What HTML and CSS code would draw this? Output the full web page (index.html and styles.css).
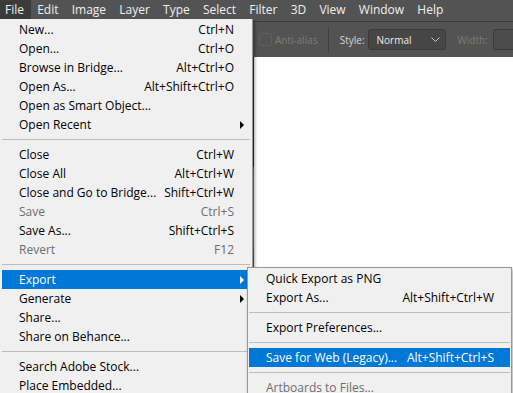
FILE: index.html
```html
<!DOCTYPE html>
<html lang="en">
<head>
    <meta charset="UTF-8">
    <title>Photoshop - File menu</title>
    <link rel="stylesheet" href="styles.css">
</head>
<body>

<div class="menubar">
    <span class="menubar-item active">File</span>
    <span class="menubar-item">Edit</span>
    <span class="menubar-item">Image</span>
    <span class="menubar-item">Layer</span>
    <span class="menubar-item">Type</span>
    <span class="menubar-item">Select</span>
    <span class="menubar-item">Filter</span>
    <span class="menubar-item">3D</span>
    <span class="menubar-item">View</span>
    <span class="menubar-item">Window</span>
    <span class="menubar-item">Help</span>
</div>

<div class="options">
    <span class="checkbox"></span>
    <span class="opt-label disabled">Anti-alias</span>
    <span class="divider"></span>
    <span class="opt-label style-label">Style:</span>
    <div class="select">
        <span>Normal</span>
        <svg width="9" height="6" viewBox="0 0 9 6"><path d="M0.5 0.5 L4.5 4.5 L8.5 0.5" fill="none" stroke="#c8c8c8" stroke-width="1"/></svg>
    </div>
    <span class="opt-label disabled width-label">Width:</span>
    <span class="field"></span>
</div>

<div class="workspace">
    <div class="toolbox"></div>
    <div class="doc-edge"></div>
    <div class="canvas"></div>
</div>

<!-- File menu -->
<ul class="menu file-menu">
    <li class="item"><span>New...</span><span>Ctrl+N</span></li>
    <li class="item"><span>Open...</span><span>Ctrl+O</span></li>
    <li class="item"><span>Browse in Bridge...</span><span>Alt+Ctrl+O</span></li>
    <li class="item"><span>Open As...</span><span>Alt+Shift+Ctrl+O</span></li>
    <li class="item"><span>Open as Smart Object...</span></li>
    <li class="item sub"><span>Open Recent</span></li>
    <li class="sep"></li>
    <li class="item"><span>Close</span><span>Ctrl+W</span></li>
    <li class="item"><span>Close All</span><span>Alt+Ctrl+W</span></li>
    <li class="item"><span>Close and Go to Bridge...</span><span>Shift+Ctrl+W</span></li>
    <li class="item disabled"><span>Save</span><span>Ctrl+S</span></li>
    <li class="item"><span>Save As...</span><span>Shift+Ctrl+S</span></li>
    <li class="item disabled"><span>Revert</span><span>F12</span></li>
    <li class="sep"></li>
    <li class="item sub selected"><span>Export</span></li>
    <li class="item sub"><span>Generate</span></li>
    <li class="item"><span>Share...</span></li>
    <li class="item"><span>Share on Behance...</span></li>
    <li class="sep"></li>
    <li class="item"><span>Search Adobe Stock...</span></li>
    <li class="item"><span>Place Embedded...</span></li>
</ul>

<!-- Export submenu -->
<ul class="menu export-menu">
    <li class="item"><span>Quick Export as PNG</span></li>
    <li class="item"><span>Export As...</span><span>Alt+Shift+Ctrl+W</span></li>
    <li class="sep"></li>
    <li class="item"><span>Export Preferences...</span></li>
    <li class="sep"></li>
    <li class="item selected"><span>Save for Web (Legacy)...</span><span>Alt+Shift+Ctrl+S</span></li>
    <li class="sep"></li>
    <li class="item disabled"><span>Artboards to Files...</span></li>
</ul>

</body>
</html>
```

FILE: styles.css
```css
body {
    margin: 0;
    width: 513px;
    height: 393px;
    overflow: hidden;
    position: relative;
    background-color: #535353;
    font-family: 'Open Sans', 'Noto Sans', Arial, sans-serif;
}
.menubar {
    display: flex;
    height: 21px;
    background-color: #535353;
    border-bottom: 1px solid #3c3c3c;
}
.menubar-item {
    padding: 0 6.6px;
    line-height: 19px;
    font-size: 12px;
    color: #f0f0f0;
}
.menubar-item:first-child {
    padding-left: 5px;
}
.menubar-item.active {
    background-color: #3b3b3b;
    height: 19px;
}
.options {
    display: flex;
    align-items: center;
    height: 35px;
    padding-left: 259px;
    background-color: #535353;
    font-size: 10px;
    white-space: nowrap;
}
.checkbox {
    flex: none;
    width: 11px;
    height: 11px;
    border: 1px solid #5f5f5f;
    border-radius: 2px;
    margin-right: 3px;
}
.opt-label {
    color: #d8d8d8;
}
.opt-label.disabled {
    color: #7c7c7c;
}
.style-label {
    margin-right: 3px;
}
.width-label {
    margin-right: 5px;
}
.divider {
    flex: none;
    width: 1px;
    height: 24px;
    background-color: #404040;
    margin: 0 11px 0 10px;
}
.select {
    flex: none;
    display: flex;
    align-items: center;
    justify-content: space-between;
    box-sizing: border-box;
    width: 78px;
    height: 21px;
    padding: 0 5px 0 8px;
    margin-right: 12px;
    background-color: #464646;
    border: 1px solid #3a3a3a;
    border-radius: 3px;
    color: #ececec;
}
.field {
    flex: none;
    width: 30px;
    height: 19px;
    background-color: #4b4b4b;
    border: 1px solid #3a3a3a;
    border-radius: 2px;
}
.workspace {
    display: flex;
    height: 336px;
}
.toolbox {
    width: 252px;
    background-color: #535353;
}
.doc-edge {
    width: 2px;
    background: linear-gradient(#2c2633 0, #2c2633 30px, #7d0a1d 30px, #7d0a1d 110px,
        #6a6f76 110px, #6f7f8c 122px, #6f7f8c 185px, #5b5b5b 200px, #5b5b5b 100%);
}
.canvas {
    flex: 1;
    background-color: #ffffff;
}
.menu {
    position: absolute;
    margin: 0;
    list-style: none;
    box-sizing: border-box;
    background-color: #f0f0f0;
    font-size: 12px;
    color: #000;
    box-shadow: 2px 2px 3px rgba(0, 0, 0, 0.35);
}
.file-menu {
    left: 0;
    top: 19px;
    width: 253px;
    padding: 1px 2px;
    border-right: 1px solid #979797;
}
.export-menu {
    left: 247px;
    top: 267px;
    width: 265px;
    padding: 1px;
    border: 1px solid #979797;
    box-shadow: 1px 2px 3px rgba(0, 0, 0, 0.35);
}
.item {
    position: relative;
    display: flex;
    justify-content: space-between;
    align-items: center;
    height: 19px;
    padding: 0 16px 0 17px;
    white-space: nowrap;
}
.item.disabled {
    color: #6d6d6d;
}
.item.selected {
    background-color: #0078d7;
    color: #ffffff;
}
.item.sub::after {
    content: '';
    position: absolute;
    right: 6px;
    top: 6px;
    border-left: 4px solid #000;
    border-top: 4px solid transparent;
    border-bottom: 4px solid transparent;
}
.item.sub.selected::after {
    border-left-color: #ffffff;
}
.sep {
    height: 1px;
    margin: 5px 0 5px;
    background-color: #bdbdbd;
}
```
